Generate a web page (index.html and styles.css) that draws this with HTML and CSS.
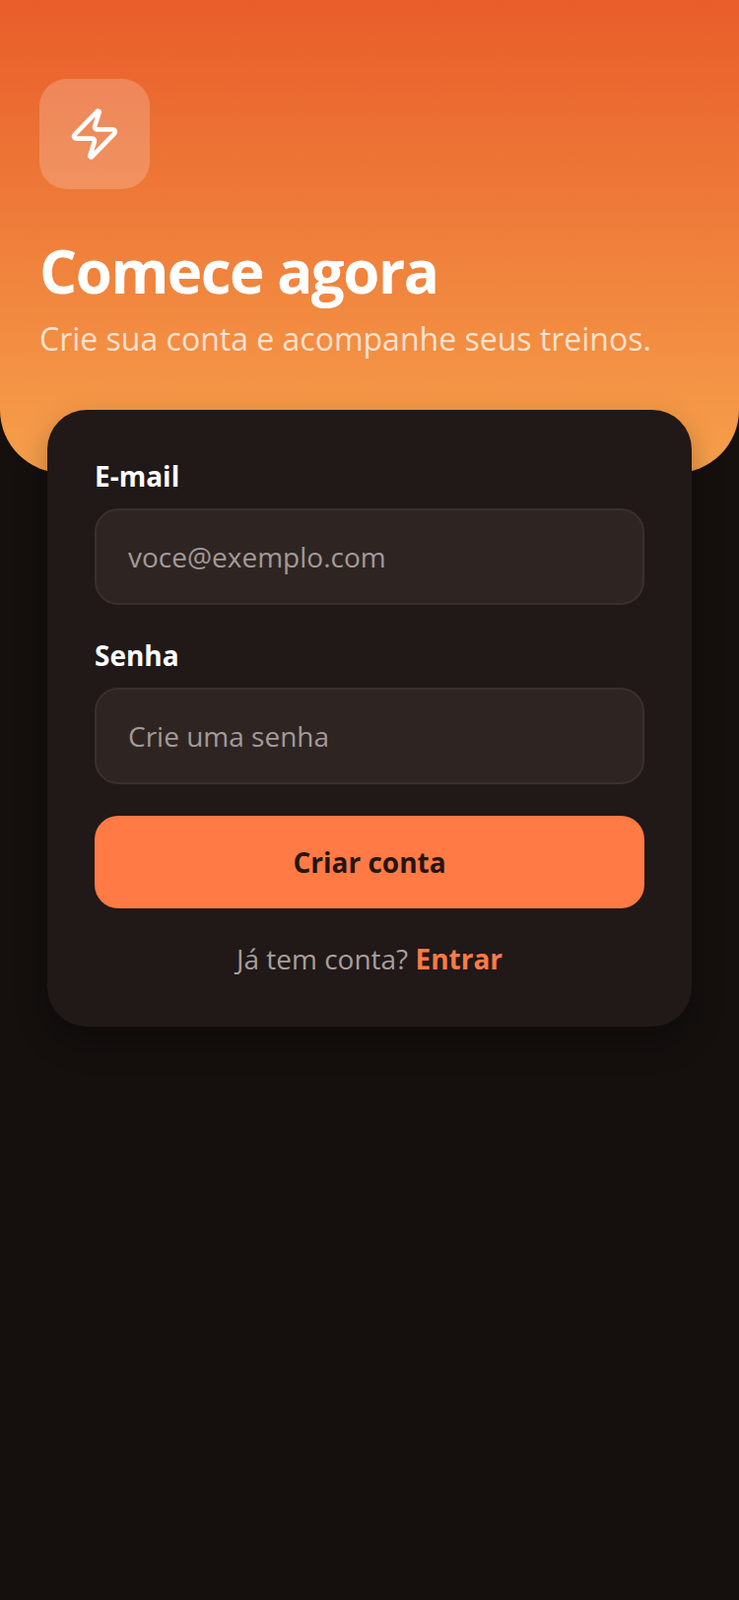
FILE: index.html
```html
<!DOCTYPE html>
<html lang="pt-BR">
<head>
  <meta charset="UTF-8"/>
  <meta name="viewport" content="width=device-width, initial-scale=1.0"/>
  <title>Criar conta</title>
  <link rel="stylesheet" href="styles.css">
</head>
<body>
  <header class="hero">
    <div class="logo">
      <svg width="56" height="56" viewBox="0 0 24 24" fill="none" stroke="#fff" stroke-width="2" stroke-linecap="round" stroke-linejoin="round">
        <path d="M4 14a1 1 0 0 1-.78-1.63l9.9-10.2a.5.5 0 0 1 .86.46l-1.92 6.02A1 1 0 0 0 13 10h7a1 1 0 0 1 .78 1.63l-9.9 10.2a.5.5 0 0 1-.86-.46l1.92-6.02A1 1 0 0 0 11 14z"/>
      </svg>
    </div>
    <h1>Comece agora</h1>
    <p class="subtitulo">Crie sua conta e acompanhe seus treinos.</p>
  </header>

  <main class="card">
    <div class="campo">
      <label for="email">E-mail</label>
      <input id="email" type="email" placeholder="voce@exemplo.com">
    </div>
    <div class="campo">
      <label for="senha">Senha</label>
      <input id="senha" type="password" placeholder="Crie uma senha">
    </div>
    <button class="botao" type="button">Criar conta</button>
    <p class="rodape">Já tem conta? <a href="#">Entrar</a></p>
  </main>
</body>
</html>
```

FILE: styles.css
```css
* { box-sizing: border-box; margin: 0; padding: 0; }

body {
  background: #15100e;
  color: #fff;
  font-family: 'Open Sans', sans-serif;
  min-height: 1624px;
}

.hero {
  height: 480px;
  padding: 80px 40px 0;
  background: linear-gradient(180deg, #e85d2a, #f6a04b);
  border-radius: 0 0 64px 64px;
}

.logo {
  width: 112px;
  height: 112px;
  display: flex;
  align-items: center;
  justify-content: center;
  background: rgba(255, 255, 255, .2);
  border-radius: 28px;
}

h1 {
  font-size: 60px;
  font-weight: 700;
  line-height: 72px;
  letter-spacing: -1.5px;
  margin-top: 47px;
}

.subtitulo {
  font-size: 32px;
  line-height: 44px;
  margin-top: 11px;
  color: rgba(255, 255, 255, .75);
}

.card {
  position: relative;
  margin: -64px 48px 0;
  height: 626px;
  padding: 48px;
  background: #201918;
  border-radius: 40px;
  box-shadow: 0 16px 32px rgba(0, 0, 0, .3);
}

.campo { margin-bottom: 32px; }

label {
  display: block;
  font-size: 28px;
  font-weight: 700;
  line-height: 38px;
  margin-bottom: 14px;
}

input {
  display: block;
  width: 100%;
  height: 98px;
  padding: 0 32px;
  background: #2e2523;
  border: 2px solid #3a302e;
  border-radius: 24px;
  color: #fff;
  font-family: inherit;
  font-size: 28px;
  outline: none;
}
input::placeholder { color: #a39a97; opacity: 1; }

.botao {
  display: block;
  width: 100%;
  height: 94px;
  background: #ff7a45;
  border: 0;
  border-radius: 24px;
  color: #241612;
  font-family: inherit;
  font-size: 28px;
  font-weight: 700;
}

.rodape {
  margin-top: 32px;
  text-align: center;
  font-size: 28px;
  line-height: 38px;
  color: #a89f9c;
}
.rodape a {
  color: #ff7a45;
  font-weight: 700;
  text-decoration: none;
}
```
